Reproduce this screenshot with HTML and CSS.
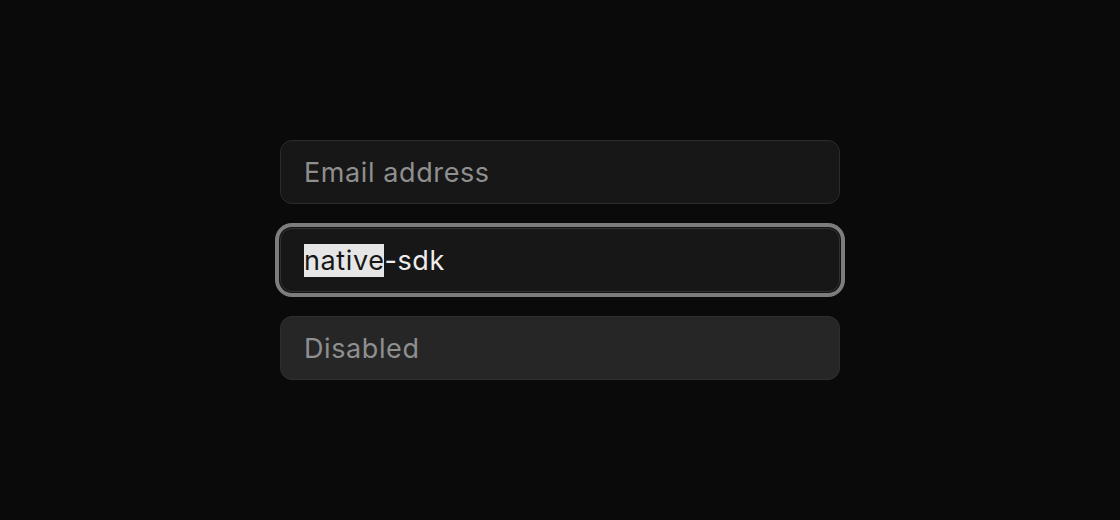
FILE: index.html
```html
<!DOCTYPE html>
<html>
<head>
<meta charset="utf-8">
<link rel="stylesheet" href="styles.css">
</head>
<body>
<div class="stack">
  <div class="field"><span class="placeholder">Email address</span></div>
  <div class="field focused"><span class="value"><span class="sel">native</span>-sdk</span></div>
  <div class="field disabled"><span class="placeholder">Disabled</span></div>
</div>
</body>
</html>
```
FILE: styles.css
```css
html, body {
  margin: 0;
  padding: 0;
  background: #0a0a0a;
  width: 1120px;
  height: 520px;
  overflow: hidden;
}
body {
  font-family: Inter, "Noto Sans", sans-serif;
}
.stack {
  display: flex;
  flex-direction: column;
  gap: 24px;
  width: 560px;
  margin: 140px auto 0;
}
.field {
  box-sizing: border-box;
  height: 64px;
  border: 1px solid #2b2b2b;
  border-radius: 12px;
  background: #171717;
  display: flex;
  align-items: center;
  padding: 0 23px;
  font-size: 27px;
  letter-spacing: 0.6px;
}
.placeholder {
  color: #8f8f8f;
}
.value {
  color: #ededed;
  line-height: 35px;
}
.sel {
  background: #e6e6e6;
  color: #171717;
}
.focused {
  border-color: #333333;
  box-shadow: 0 0 0 1px #111111, 0 0 0 5px #7d7d7d;
}
.disabled {
  background: #262626;
  border-color: #2f2f2f;
}
```
